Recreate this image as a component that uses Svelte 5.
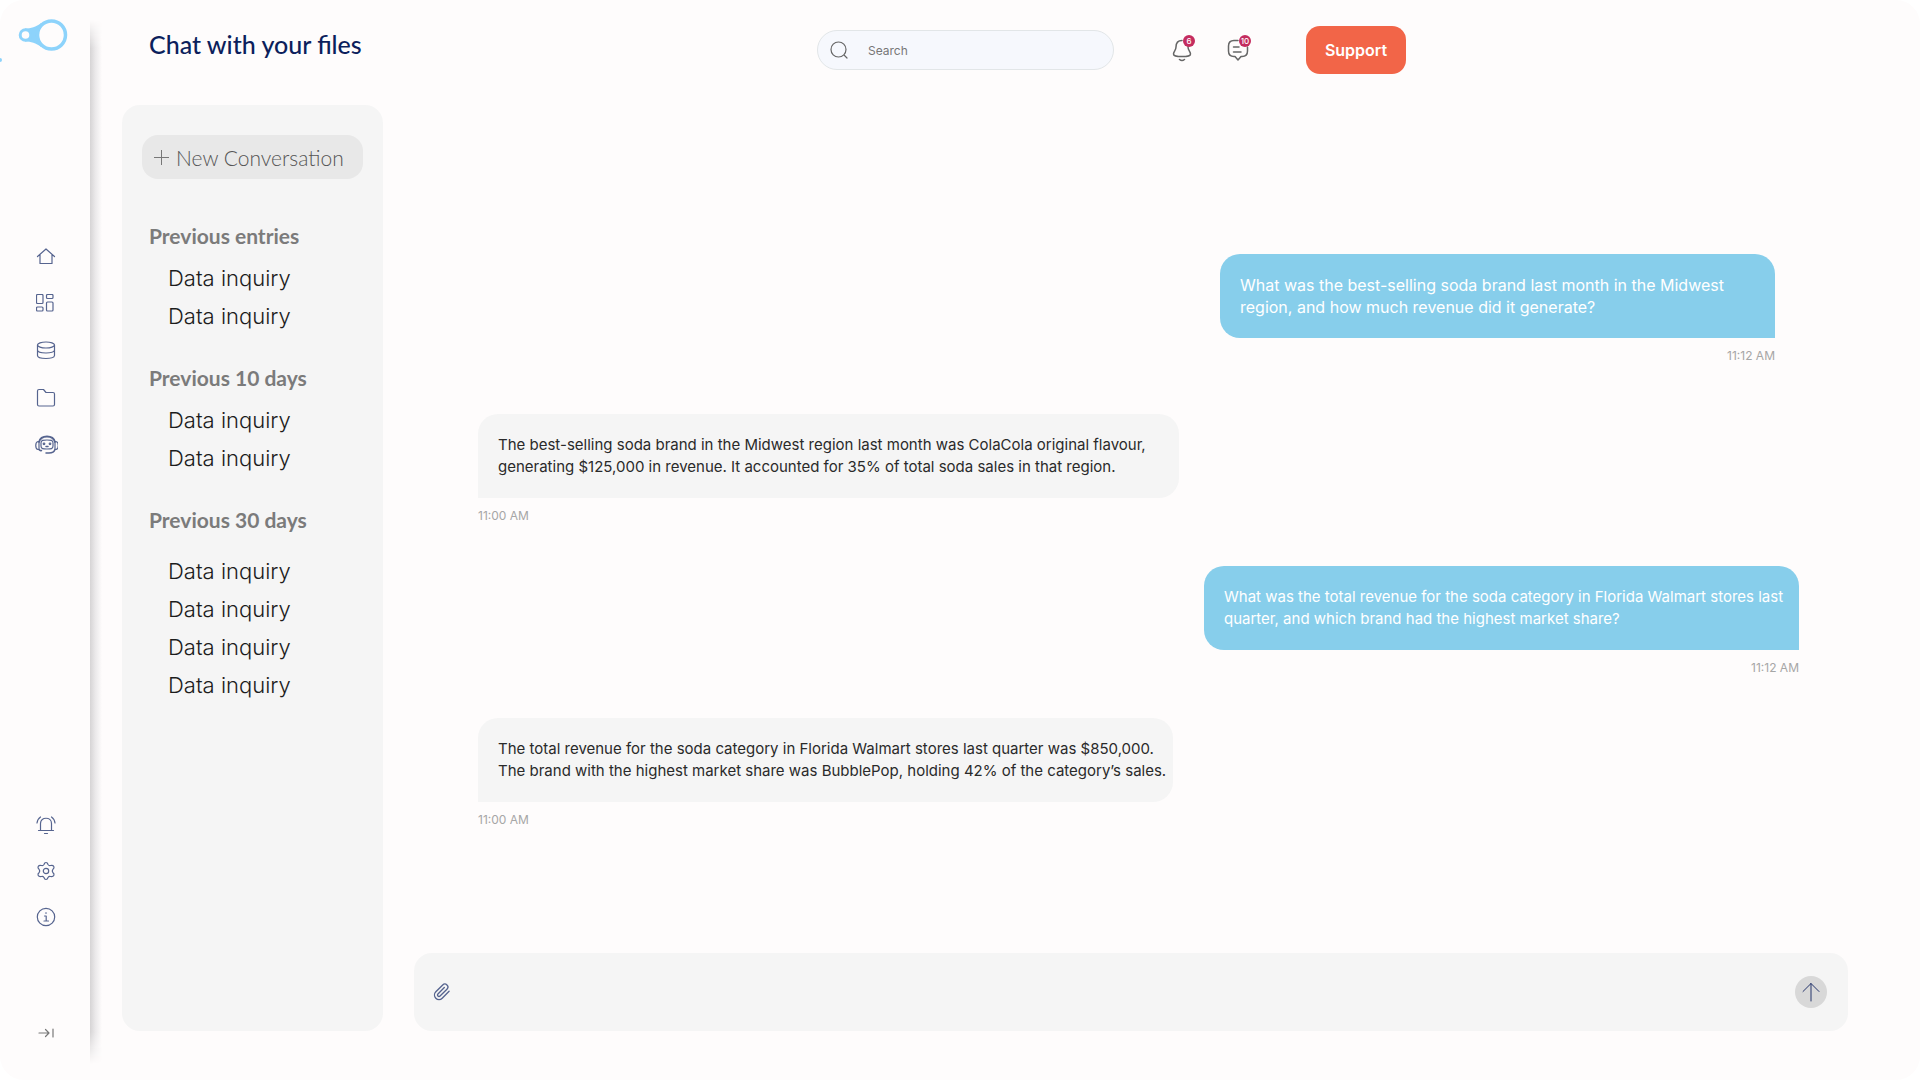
<script lang="ts">
	type Message = { from: 'user' | 'bot'; text: string; time: string; width: number; large?: boolean };

	let search = $state('');
	let draft = $state('');

	const groups = [
		{ title: 'Previous entries', items: ['Data inquiry', 'Data inquiry'] },
		{ title: 'Previous 10 days', items: ['Data inquiry', 'Data inquiry'] },
		{
			title: 'Previous 30 days',
			items: ['Data inquiry', 'Data inquiry', 'Data inquiry', 'Data inquiry'],
			spaced: true,
		},
	];

	let messages = $state<Message[]>([
		{
			from: 'user',
			text: 'What was the best-selling soda brand last month in the Midwest\nregion, and how much revenue did it generate?',
			time: '11:12 AM',
			width: 555,
			large: true,
		},
		{
			from: 'bot',
			text: 'The best-selling soda brand in the Midwest region last month was ColaCola original flavour,\ngenerating $125,000 in revenue. It accounted for 35% of total soda sales in that region.',
			time: '11:00 AM',
			width: 701,
		},
		{
			from: 'user',
			text: 'What was the total revenue for the soda category in Florida Walmart stores last\nquarter, and which brand had the highest market share?',
			time: '11:12 AM',
			width: 595,
		},
		{
			from: 'bot',
			text: 'The total revenue for the soda category in Florida Walmart stores last quarter was $850,000.\nThe brand with the highest market share was BubblePop, holding 42% of the category’s sales.',
			time: '11:00 AM',
			width: 695,
		},
	]);
</script>

<div class="app">
	<aside class="sidebar">
		<a class="logo" href="#home" aria-label="Home page">
			<svg width="92" height="46" viewBox="0 0 92 46">
				<path d="M25 9.500C31 9.500 36 8 41 4V28C36 24 31 22.500 25 22.500Z" fill="#8dd3fb" />
				<circle cx="25.500" cy="16" r="5.300" fill="#fefcfc" stroke="#8dd3fb" stroke-width="3" />
				<circle cx="51.500" cy="16" r="14" fill="#fefcfc" stroke="#8dd3fb" stroke-width="3.500" />
				<circle cx="0" cy="41" r="2" fill="#8dd3fb" />
			</svg>
		</a>

		<nav class="nav" aria-label="Main">
			<a href="#home" aria-label="Home">
				<svg viewBox="0 0 20 20"><path d="M1.500 9.500 10 2l8.500 7.500M4 7.500V16.500H16V7.500" /></svg>
			</a>
			<a href="#dashboard" aria-label="Dashboard">
				<svg viewBox="0 0 20 20">
					<rect x="0.500" y="0.500" width="6.500" height="9" rx="1" />
					<rect x="10.500" y="0.500" width="6.500" height="4" rx="1" />
					<rect x="0.500" y="13" width="6.500" height="4" rx="1" />
					<rect x="10.500" y="8" width="6.500" height="9" rx="1" />
				</svg>
			</a>
			<a href="#data" aria-label="Data">
				<svg viewBox="0 0 20 20">
					<ellipse cx="10" cy="4" rx="8.500" ry="3" />
					<path d="M1.500 4V14.500C1.500 18.500 18.500 18.500 18.500 14.500V4M1.500 9C1.500 13 18.500 13 18.500 9" />
				</svg>
			</a>
			<a href="#files" aria-label="Files">
				<svg viewBox="0 0 20 20"><path d="M1.500 3Q1.500 1.500 3 1.500H7.500L10 4.500H17Q18.500 4.500 18.500 6V16.500Q18.500 18 17 18H3Q1.500 18 1.500 16.500Z" /></svg>
			</a>
			<a href="#assistant" aria-label="Assistant">
				<svg width="24" height="20" viewBox="0 0 24 20">
					<path d="M5 7C6 3 9 1.500 13 1.500S20 3 21 7" stroke-width="1.800" />
					<path d="M5 6.500H4C1 7 1 14 4 14.500H5ZM21 6.500H22C25 7 25 14 22 14.500H21Z" />
					<path d="M7 8C7 5 9 5 13 5S19 5 19 8V11C19 14 17 14 13 14S7 14 7 11Z" />
					<path d="M12 11.500H14M5 14.500Q6 16 7.500 15.500M21 14.500Q20 18 15 18H12" stroke-width="1.500" />
					<circle cx="10" cy="8.800" r="0.800" /><circle cx="16" cy="8.800" r="0.800" />
				</svg>
			</a>
		</nav>

		<nav class="nav nav-bottom" aria-label="Preferences">
			<a href="#alerts" aria-label="Alerts">
				<svg viewBox="0 0 20 20"><path d="M4.500 15V8.500C4.500 1.500 15.500 1.500 15.500 8.500V15M2.500 15.500H17.500M8.500 18.500H11.500M1 8Q1.500 4 4.500 2M19 8Q18.500 4 15.500 2" /></svg>
			</a>
			<a href="#settings" aria-label="Settings">
				<svg viewBox="0 0 20 20">
					<path d="M8 3.500Q8.500 1.500 10 1.500T12 3.500Q13 5 14.500 4.500Q17 4 17.800 5.500T17 8.200Q15.500 10 17 11.800Q18.600 13 17.800 14.500T14.500 15.500Q13 15 12 16.500Q11.500 18.500 10 18.500T8 16.500Q7 15 5.500 15.500Q3 16 2.200 14.500T3 11.800Q4.500 10 3 8.200Q1.400 7 2.200 5.500T5.500 4.500Q7 5 8 3.500Z" />
					<circle cx="10" cy="10" r="2.700" />
				</svg>
			</a>
			<a href="#info" aria-label="Information">
				<svg viewBox="0 0 20 20"><circle cx="10" cy="10" r="8.700" /><path d="M8.500 9H10.200V13.800M8 14H12.500M9.500 6H10.500" /></svg>
			</a>
		</nav>

		<button class="expand" aria-label="Expand sidebar">
			<svg viewBox="0 0 20 20"><path d="M3 10H13M9.500 6.500 13 10 9.500 13.500M17 6V14" /></svg>
		</button>
	</aside>

	<div class="main">
		<header class="topbar">
			<h1>Chat with your files</h1>
			<div class="tools">
				<label class="search">
					<svg width="18" height="18" viewBox="0 0 18 18"><circle cx="8.500" cy="8.500" r="7.500" /><path d="M14.500 14.500 17 17" /></svg>
					<input type="text" placeholder="Search" aria-label="Search" bind:value={search} />
				</label>
				<div class="indicators">
					<button class="indicator" aria-label="Notifications">
						<svg width="22" height="24" viewBox="0 0 22 24"><path d="M11 2.500C6.500 2.500 5 6 5 9C5 12.500 2.500 13.500 2.500 16C2.500 18 4.500 18.500 11 18.500S19.500 18 19.500 16C19.500 13.500 17 12.500 17 9V8M8.500 21.500Q11 23.500 13.500 21.500" /></svg>
						<span class="badge">6</span>
					</button>
					<button class="indicator" aria-label="Messages">
						<svg width="22" height="24" viewBox="0 0 22 24"><path d="M11 2.500H7Q1.500 2.500 1.500 8V13Q1.500 18.500 7 18.500H8L11 22 14 18.500H15Q20.500 18.500 20.500 13V9M6.500 9H12M6.500 14H14" /></svg>
						<span class="badge">10</span>
					</button>
				</div>
				<button class="support">Support</button>
			</div>
		</header>

		<div class="workspace">
			<aside class="history">
				<button class="new-conversation">
					<svg width="15" height="15" viewBox="0 0 15 15"><path d="M7.500 0V15M0 7.500H15" /></svg>
					New Conversation
				</button>
				{#each groups as group}
					<section class="group" class:spaced={group.spaced}>
						<h2>{group.title}</h2>
						<ul>
							{#each group.items as item}
								<li><a href="#conversation">{item}</a></li>
							{/each}
						</ul>
					</section>
				{/each}
			</aside>

			<main class="chat">
				<div class="messages">
					{#each messages as message}
						<article class="message {message.from}" class:large={message.large}>
							<p class="bubble" style="width: {message.width}px">{message.text}</p>
							<time>{message.time}</time>
						</article>
					{/each}
				</div>
				<form class="composer" onsubmit={(e) => e.preventDefault()}>
					<button type="button" class="attach" aria-label="Attach a file">
						<svg width="18" height="18" viewBox="0 0 24 24"><path d="M21.440 11.050l-9.190 9.190a6 6 0 0 1-8.490-8.490l9.190-9.190a4 4 0 0 1 5.660 5.660l-9.200 9.190a2 2 0 0 1-2.830-2.830l8.490-8.480" /></svg>
					</button>
					<textarea rows="1" aria-label="Message" bind:value={draft}></textarea>
					<button class="send" aria-label="Send message">
						<svg width="20" height="20" viewBox="0 0 20 20"><path d="M10 19V1.500M2 9.500 10 1.500 18 9.500" /></svg>
					</button>
				</form>
			</main>
		</div>
	</div>
</div>

<style>
	:global(body) {
		background: #fff;
	}

	.app {
		display: flex;
		min-height: 100vh;
		background: #fefcfc;
		border-radius: 24px;
		overflow: hidden;
		font-family: Inter, 'Liberation Sans', sans-serif;
	}

	.app * {
		box-sizing: border-box;
	}

	button {
		padding: 0;
		border: none;
		background: none;
		font-family: inherit;
		cursor: pointer;
	}

	svg {
		display: block;
		flex-shrink: 0;
	}

	svg path {
		stroke-linecap: round;
		stroke-linejoin: round;
	}

	.sidebar {
		position: relative;
		display: flex;
		flex-direction: column;
		align-items: center;
		flex-shrink: 0;
		width: 90px;
		padding: 19px 0 37px 2px;
	}

	.sidebar::after {
		content: '';
		position: absolute;
		top: 20px;
		bottom: 16px;
		left: 100%;
		width: 12px;
		background: linear-gradient(to right, #d6d4d5, #ebe9ea 45%, #fefcfc);
		mask-image: linear-gradient(transparent, #000 28px, #000 calc(100% - 32px), transparent);
	}

	.logo {
		align-self: flex-start;
		margin-left: -2px;
	}

	.nav {
		display: flex;
		flex-direction: column;
		align-items: center;
		gap: 27px;
		margin-top: 182px;
	}

	.nav-bottom {
		gap: 26px;
		margin-top: auto;
	}

	.nav svg {
		height: 20px;
		fill: none;
		stroke: #56648f;
		stroke-width: 1.2;
	}

	.expand {
		margin-top: 96px;
	}

	.expand svg {
		width: 20px;
		height: 20px;
		fill: none;
		stroke: #777;
		stroke-width: 1.2;
	}

	.main {
		display: flex;
		flex-direction: column;
		flex: 1;
		min-width: 0;
		padding: 26px 72px 49px 32px;
	}

	.topbar {
		display: grid;
		grid-template-columns: 668fr 1031fr;
		padding-left: 27px;
	}

	h1 {
		margin: 0;
		color: #0c1f5c;
		font-family: Lato, 'Open Sans', sans-serif;
		font-size: 25px;
		font-weight: 500;
		line-height: 36px;
	}

	.tools {
		display: flex;
		align-items: center;
		height: 48px;
	}

	.search {
		display: flex;
		align-items: center;
		gap: 20px;
		width: 297px;
		height: 40px;
		padding: 0 12px;
		background: #f6f8fd;
		border: 1px solid #e2e6e8;
		border-radius: 20px;
	}

	.search svg,
	.indicator svg {
		fill: none;
		stroke: #666;
		stroke-width: 1.2;
	}

	.search input {
		flex: 1;
		min-width: 0;
		padding: 0;
		border: none;
		outline: none;
		background: none;
		font-family: inherit;
		font-size: 12px;
	}

	.search input::placeholder {
		color: #777;
		opacity: 1;
	}

	.indicators {
		display: flex;
		gap: 34px;
		margin-left: 57px;
	}

	.indicator {
		position: relative;
	}

	.indicator svg {
		stroke-width: 1.5;
	}

	.badge {
		position: absolute;
		top: -3px;
		right: -2px;
		width: 12px;
		height: 12px;
		border-radius: 50%;
		background: #c42c5f;
		color: #fff;
		font-size: 8px;
		font-weight: 500;
		line-height: 12px;
		text-align: center;
	}

	.support {
		width: 100px;
		height: 48px;
		margin-left: 57px;
		border-radius: 14px;
		background: #f26548;
		color: #fff;
		font-size: 16px;
		font-weight: 600;
	}

	.workspace {
		display: flex;
		flex: 1;
		gap: 31px;
		margin-top: 31px;
	}

	.history {
		flex-shrink: 0;
		width: 261px;
		padding: 30px 20px;
		border-radius: 18px;
		background: #f5f5f5;
		font-family: Lato, 'Open Sans', sans-serif;
	}

	.new-conversation {
		display: flex;
		align-items: center;
		gap: 7px;
		width: 100%;
		height: 44px;
		padding: 0 12px;
		border-radius: 16px;
		background: #e8e8e8;
		color: #555;
		font-size: 21px;
		font-weight: 300;
		white-space: nowrap;
	}

	.new-conversation svg {
		stroke: #777;
	}

	.group {
		margin-top: 28px;
		padding-left: 7px;
	}

	.new-conversation + .group {
		margin-top: 42px;
	}

	.group h2 {
		margin: 0;
		color: #7b7b7b;
		font-size: 21px;
		font-weight: 700;
		line-height: 30px;
	}

	.group ul {
		margin: 8px 0 0;
		padding: 0 0 0 19px;
		list-style: none;
	}

	.group.spaced ul {
		margin-top: 17px;
	}

	.group li a {
		display: block;
		color: #1c1c1c;
		font-family: Inter, sans-serif;
		font-size: 22px;
		font-weight: 300;
		line-height: 38px;
		text-decoration: none;
	}

	.chat {
		display: flex;
		flex-direction: column;
		justify-content: space-between;
		flex: 1;
		min-width: 0;
	}

	.messages {
		display: flex;
		flex-direction: column;
		gap: 42px;
		padding: 149px 49px 40px 64px;
	}

	.message {
		display: flex;
		flex-direction: column;
		align-items: flex-start;
		gap: 10px;
	}

	.message.user {
		align-items: flex-end;
	}

	.message:first-child {
		margin-right: 24px;
		margin-bottom: 8px;
	}

	.bubble {
		max-width: 100%;
		margin: 0;
		padding: 20px 4px 20px 20px;
		border-radius: 20px 20px 20px 0;
		background: #f5f5f5;
		color: #2a2a2a;
		font-size: 15px;
		line-height: 22px;
		white-space: pre-line;
	}

	.user .bubble {
		border-radius: 20px 20px 0 20px;
		background: #87ceeb;
		color: #fff;
	}

	.large .bubble {
		font-size: 16px;
	}

	time {
		color: #a6a6a6;
		font-size: 12px;
		line-height: 16px;
	}

	.composer {
		display: flex;
		align-items: center;
		gap: 16px;
		height: 78px;
		padding: 0 21px 0 19px;
		border-radius: 18px;
		background: #f5f5f5;
	}

	.attach svg {
		fill: none;
		stroke: #56648f;
		stroke-width: 1.8;
	}

	.composer textarea {
		flex: 1;
		padding: 0;
		border: none;
		outline: none;
		background: none;
		resize: none;
		font-family: inherit;
		font-size: 14px;
		line-height: 22px;
	}

	.send {
		display: grid;
		place-items: center;
		width: 32px;
		height: 32px;
		border-radius: 50%;
		background: #d8d8d8;
	}

	.send svg {
		fill: none;
		stroke: #25346b;
	}
</style>
